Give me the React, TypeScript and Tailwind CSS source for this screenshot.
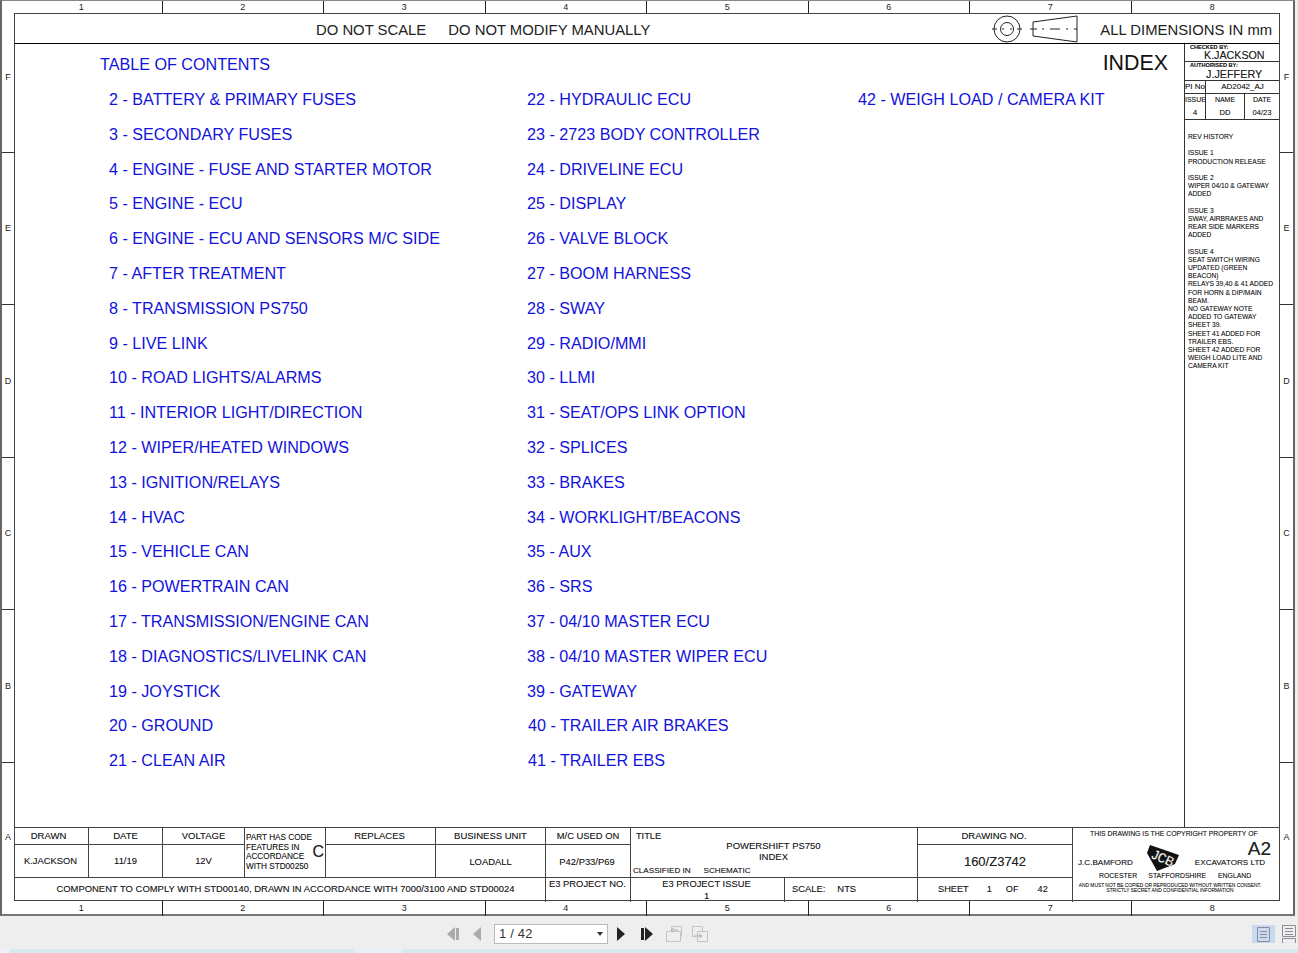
const leftCol = [
  "2 - BATTERY & PRIMARY FUSES",
  "3 - SECONDARY FUSES",
  "4 - ENGINE - FUSE AND STARTER MOTOR",
  "5 - ENGINE - ECU",
  "6 - ENGINE - ECU AND SENSORS M/C SIDE",
  "7 - AFTER TREATMENT",
  "8 - TRANSMISSION PS750",
  "9 - LIVE LINK",
  "10 - ROAD LIGHTS/ALARMS",
  "11 - INTERIOR LIGHT/DIRECTION",
  "12 - WIPER/HEATED WINDOWS",
  "13 - IGNITION/RELAYS",
  "14 - HVAC",
  "15 - VEHICLE CAN",
  "16 - POWERTRAIN CAN",
  "17 - TRANSMISSION/ENGINE CAN",
  "18 - DIAGNOSTICS/LIVELINK CAN",
  "19 - JOYSTICK",
  "20 - GROUND",
  "21 - CLEAN AIR",
];

const midCol = [
  "22 - HYDRAULIC ECU",
  "23 - 2723 BODY CONTROLLER",
  "24 - DRIVELINE ECU",
  "25 - DISPLAY",
  "26 - VALVE BLOCK",
  "27 - BOOM HARNESS",
  "28 - SWAY",
  "29 - RADIO/MMI",
  "30 - LLMI",
  "31 - SEAT/OPS LINK OPTION",
  "32 - SPLICES",
  "33 - BRAKES",
  "34 - WORKLIGHT/BEACONS",
  "35 - AUX",
  "36 - SRS",
  "37 - 04/10 MASTER ECU",
  "38 - 04/10 MASTER WIPER ECU",
  "39 - GATEWAY",
  "40 - TRAILER AIR BRAKES",
  "41 - TRAILER EBS",
];

const revHistory = [
  "REV HISTORY",
  "",
  "ISSUE 1",
  "PRODUCTION RELEASE",
  "",
  "ISSUE 2",
  "WIPER 04/10 & GATEWAY",
  "ADDED",
  "",
  "ISSUE 3",
  "SWAY, AIRBRAKES AND",
  "REAR SIDE MARKERS",
  "ADDED",
  "",
  "ISSUE 4",
  "SEAT SWITCH WIRING",
  "UPDATED (GREEN",
  "BEACON)",
  "RELAYS 39,40 & 41 ADDED",
  "FOR HORN & DIP/MAIN",
  "BEAM.",
  "NO GATEWAY NOTE",
  "ADDED TO GATEWAY",
  "SHEET 39.",
  "SHEET 41 ADDED FOR",
  "TRAILER EBS.",
  "SHEET 42 ADDED FOR",
  "WEIGH LOAD LITE AND",
  "CAMERA KIT",
];

const Ruler = ({ height }: { height: string }) => (
  <div className={`-ml-px grid w-[1292px] grid-cols-8 text-[9px] text-[#222] ${height}`}>
    {[1, 2, 3, 4, 5, 6, 7, 8].map((n) => (
      <div key={n} className="border-r border-[#222] text-center last:border-r-0">
        {n}
      </div>
    ))}
  </div>
);

const SideRuler = ({ width }: { width: string }) => (
  <div className={`flex flex-col text-[9px] text-[#222] ${width}`}>
    <div className="flex h-[140px] items-center justify-center border-b border-[#333] pb-[9px]">F</div>
    <div className="flex h-[152.4px] items-center justify-center border-b border-[#333]">E</div>
    <div className="flex h-[152.4px] items-center justify-center border-b border-[#333] pt-[1px]">D</div>
    <div className="flex h-[152.4px] items-center justify-center border-b border-[#333] pt-[1px]">C</div>
    <div className="flex h-[152.4px] items-center justify-center border-b border-[#333] pt-[1px]">B</div>
    <div className="flex flex-1 items-center justify-center pt-[12px]">A</div>
  </div>
);

const ProjectionIcon = () => (
  <svg width="90" height="30" viewBox="0 0 90 30" className="shrink-0" fill="none" stroke="#222" strokeWidth="1">
    <circle cx="17" cy="15" r="13" />
    <circle cx="17" cy="15" r="6.5" />
    <path d="M2 15h5M12 15h2M20 15h2M27 15h5" />
    <path d="M43 8 87 2v26L43 22Z" />
    <path d="M40 15h7M52 15h2M60 15h10M76 15h2M84 15h3" />
  </svg>
);

const JcbLogo = () => (
  <svg width="34" height="28" viewBox="0 0 34 28" className="shrink-0 overflow-visible">
    <path d="M4 1 33 11 29 20 11 27 1 9Z" fill="#111" />
    <g transform="rotate(24 17 14)">
      <text
        x="17"
        y="19"
        textAnchor="middle"
        fontFamily="Liberation Sans, sans-serif"
        fontWeight="700"
        fontSize="14"
        textLength="23"
        lengthAdjust="spacingAndGlyphs"
        fill="#fff"
        stroke="#111"
        strokeWidth="0.3"
      >
        JCB
      </text>
    </g>
  </svg>
);

const Cell = ({ className = "", children }: { className?: string; children?: React.ReactNode }) => (
  <div className={`flex items-center justify-center border-r border-b border-[#444] text-center ${className}`}>
    {children}
  </div>
);

const TitleBlock = () => (
  <div className="grid h-[73px] grid-cols-[74px_74px_82px_81px_110px_110px_85px_154px_133px_155px_1fr] grid-rows-[17px_33px_1fr] border-t border-[#444] text-[9.4px] text-[#222] [text-shadow:0_0_0.4px_#0006]">
    <Cell className="col-start-1 row-start-1 pr-[6px] text-[9.5px]">DRAWN</Cell>
    <Cell className="col-start-1 row-start-2 pr-[2px]">K.JACKSON</Cell>
    <Cell className="col-start-2 row-start-1 text-[9.5px]">DATE</Cell>
    <Cell className="col-start-2 row-start-2">11/19</Cell>
    <Cell className="col-start-3 row-start-1 text-[9.5px]">VOLTAGE</Cell>
    <Cell className="col-start-3 row-start-2">12V</Cell>
    <div className="relative col-start-4 row-span-2 row-start-1 border-r border-b border-[#444] pt-[5px] pl-[1px] text-[8.2px] leading-[9.5px]">
      PART HAS CODE
      <br />
      FEATURES IN
      <br />
      ACCORDANCE
      <br />
      WITH STD00250
      <span className="absolute top-[15px] right-[1px] text-[16px] leading-[18px]">C</span>
    </div>
    <Cell className="col-start-5 row-start-1 pr-[2px] text-[9.5px]">REPLACES</Cell>
    <Cell className="col-start-5 row-start-2" />
    <Cell className="col-start-6 row-start-1 text-[9.5px]">BUSINESS UNIT</Cell>
    <Cell className="col-start-6 row-start-2 pt-[3px]">LOADALL</Cell>
    <Cell className="col-start-7 row-start-1">M/C USED ON</Cell>
    <Cell className="col-start-7 row-start-2 pt-[3px] pr-[2px]">P42/P33/P69</Cell>
    <div className="col-span-2 col-start-8 row-span-2 row-start-1 flex flex-col border-r border-b border-[#444]">
      <div className="h-[12px] pl-[5px] text-[9.2px] leading-[17px]">TITLE</div>
      <div className="pr-[1px] text-center text-[9.5px] leading-[11px]">
        POWERSHIFT PS750
        <br />
        INDEX
      </div>
      <div className="mt-auto flex gap-[13px] pb-[1px] pl-[2px] text-[8.1px] leading-[10px]">
        <span>CLASSIFIED IN</span>
        <span>SCHEMATIC</span>
      </div>
    </div>
    <Cell className="col-start-10 row-start-1 pr-[2px] text-[9.5px]">DRAWING NO.</Cell>
    <Cell className="col-start-10 row-start-2 pt-[1px] text-[13px]">160/Z3742</Cell>
    <div className="relative col-start-11 row-span-3 row-start-1 flex flex-col">
      <div className="pt-px pl-[17px] text-[6.87px] leading-[10px]">THIS DRAWING IS THE COPYRIGHT PROPERTY OF</div>
      <span className="absolute top-[11px] right-[8px] text-[19px] leading-[20px]">A2</span>
      <div className="mt-[5px] flex h-[28px] items-end text-[8.1px] leading-[10px]">
        <span className="pb-[4px] pl-[5px]">J.C.BAMFORD</span>
        <span className="ml-[13px]">
          <JcbLogo />
        </span>
        <span className="ml-[15px] pb-[4px]">EXCAVATORS LTD</span>
      </div>
      <div className="-mt-px flex text-[6.9px] leading-[10px]">
        <span className="ml-[26px]">ROCESTER</span>
        <span className="ml-[11px]">STAFFORDSHIRE</span>
        <span className="ml-[12px]">ENGLAND</span>
      </div>
      <div className="mt-[2px] pr-[12px] text-center text-[4.87px] leading-[5px]">
        AND MUST NOT BE COPIED OR REPRODUCED WITHOUT WRITTEN CONSENT.
        <br />
        STRICTLY SECRET AND CONFIDENTIAL INFORMATION
      </div>
    </div>
    <div className="col-span-6 col-start-1 row-start-3 flex items-center justify-center border-r border-[#444] pb-[1px] pl-[11px] text-[9.45px]">
      COMPONENT TO COMPLY WITH STD00140, DRAWN IN ACCORDANCE WITH 7000/3100 AND STD00024
    </div>
    <div className="col-start-7 row-start-3 border-r border-[#444] pl-[3px] leading-[12px]">E3 PROJECT NO.</div>
    <div className="col-start-8 row-start-3 border-r border-[#444] pr-[2px] text-center leading-[12px]">
      E3 PROJECT ISSUE
      <br />1
    </div>
    <div className="col-start-9 row-start-3 flex items-center border-r border-[#444] pb-[1px] pl-[7px]">
      <span>SCALE:</span>
      <span className="ml-[12px]">NTS</span>
    </div>
    <div className="col-start-10 row-start-3 flex items-center border-r border-[#444] pb-[1px] pl-[20px] text-[9.2px]">
      <span>SHEET</span>
      <span className="ml-[18px]">1</span>
      <span className="ml-[14px]">OF</span>
      <span className="ml-[19px]">42</span>
    </div>
  </div>
);

const RevisionPanel = () => (
  <div className="w-[95px] shrink-0 border-l border-[#333] text-[#222] [text-shadow:0_0_0.4px_#0006]">
    <div className="h-[18px] border-b border-[#333] text-[10.7px] leading-[10px]">
      <div className="pt-[1px] pl-[5px] text-[5.6px] leading-[4px] font-bold">CHECKED BY:</div>
      <div className="pt-[1px] pl-[19px]">K.JACKSON</div>
    </div>
    <div className="h-[19px] border-b border-[#333] text-[10.8px] leading-[10px]">
      <div className="pt-[1px] pl-[5px] text-[5.6px] leading-[4px] font-bold">AUTHORISED BY:</div>
      <div className="pt-[2px] pl-[21px]">J.JEFFERY</div>
    </div>
    <div className="flex h-[13px] border-b border-[#333] text-[8px] leading-[12px]">
      <div className="w-[21px] border-r border-[#333] text-center">PI No</div>
      <div className="flex-1 text-center">AD2042_AJ</div>
    </div>
    <div className="flex h-[26px] border-b border-[#333] text-center text-[7px] leading-[12px]">
      <div className="w-[21px] border-r border-[#333]">
        ISSUE
        <div className="text-[7.6px] leading-[13px]">4</div>
      </div>
      <div className="w-[39px] border-r border-[#333]">
        NAME
        <div className="text-[7.6px] leading-[13px]">DD</div>
      </div>
      <div className="flex-1">
        DATE
        <div className="text-[7.6px] leading-[13px]">04/23</div>
      </div>
    </div>
    <div className="pt-[13px] pl-[3px] text-[6.7px] leading-[8.2px]">
      {revHistory.map((line, i) => (
        <div key={i} className="h-[8.2px] whitespace-nowrap">
          {line}
        </div>
      ))}
    </div>
  </div>
);

const ContentsColumn = ({ items, className }: { items: string[]; className: string }) => (
  <div className={`flex flex-col ${className}`}>
    {items.map((item) => (
      <div
        key={item}
        className={`h-[34.8px] whitespace-nowrap leading-[34.8px] ${item.startsWith("40") || item.startsWith("41") ? "pl-px" : ""}`}
      >
        {item}
      </div>
    ))}
  </div>
);

const Frame = () => (
  <div className="flex w-[1266px] shrink-0 flex-col border border-[#444] bg-white">
    <div className="flex h-[30px] items-center border-b border-black text-[14.85px] text-[#222]">
      <span className="ml-[301px] pt-[3px]">DO NOT SCALE</span>
      <span className="ml-[22px] pt-[3px]">DO NOT MODIFY MANUALLY</span>
      <span className="ml-[340px]">
        <ProjectionIcon />
      </span>
      <span className="ml-[20px] pt-[3px]">ALL DIMENSIONS IN mm</span>
    </div>
    <div className="flex min-h-0 flex-1">
      <div className="flex-1 text-[16.15px] text-[#1212dc]">
        <div className="flex h-[38.1px] items-center justify-between pt-[3px] pr-[16px] pl-[85px]">
          <span>TABLE OF CONTENTS</span>
          <span className="-mt-[3px] text-[21.4px] text-[#111]">INDEX</span>
        </div>
        <div className="flex">
          <ContentsColumn items={leftCol} className="ml-[94px] w-[418px]" />
          <ContentsColumn items={midCol} className="w-[331px]" />
          <ContentsColumn items={["42 - WEIGH LOAD / CAMERA KIT"]} className="" />
        </div>
      </div>
      <RevisionPanel />
    </div>
    <TitleBlock />
  </div>
);

const Triangle = ({ dir, color, bar }: { dir: "left" | "right"; color: string; bar?: boolean }) => (
  <svg width="15" height="16" viewBox="0 0 15 16" fill={color}>
    {dir === "left" ? <path d="M10 1v14L2 8Z" /> : <path d="M4 1v14l8-7Z" />}
    {bar && (dir === "left" ? <path d="M11 2h3v12h-3Z" /> : <path d="M0 2h3v12H0Z" />)}
  </svg>
);

const MoveIcon = ({ flip }: { flip?: boolean }) => (
  <svg width="18" height="18" viewBox="0 0 18 18" fill="none" stroke="#c4c4c4">
    {flip ? (
      <>
        <path d="M1.5 1.5h10v5M1.5 1.5v10h3" />
        <path d="M6.5 6.5h10v10h-10Z" />
        <path d="M3 11h8M8 9l3 2-3 2" stroke="#a8b4bc" />
      </>
    ) : (
      <>
        <path d="M6.5 1.5h10v10M6.5 1.5v3" />
        <path d="M1.5 6.5h14v10h-14Z" />
        <path d="M13 5H6M9 3 6 5l3 2" stroke="#a8b4bc" />
      </>
    )}
  </svg>
);

const Toolbar = () => (
  <div className="flex h-[33px] items-center pt-[3px] text-[13px] text-[#333]">
    <div className="ml-[445px]">
      <Triangle dir="left" color="#aaa" bar />
    </div>
    <div className="ml-[11px]">
      <Triangle dir="left" color="#aaa" />
    </div>
    <div className="ml-[8px] flex h-[20px] w-[114px] items-center justify-between border border-[#bbb] bg-white pr-[4px] pl-[4px] tracking-[0.2px]">
      <span>1 / 42</span>
      <svg width="6" height="4" viewBox="0 0 6 4" fill="#333">
        <path d="M0 0h6L3 4Z" />
      </svg>
    </div>
    <div className="ml-[5px]">
      <Triangle dir="right" color="#222" />
    </div>
    <div className="ml-[13px]">
      <Triangle dir="right" color="#222" bar />
    </div>
    <div className="ml-[9px]">
      <MoveIcon />
    </div>
    <div className="ml-[8px]">
      <MoveIcon flip />
    </div>
    <div className="ml-auto flex h-[18px] w-[23px] items-center justify-center bg-[#c9d9f0]">
      <svg width="13" height="15" viewBox="0 0 13 15" fill="none" stroke="#8a8f96">
        <path d="M.5.5h12v14H.5ZM3 4.5h7M3 7.5h7M3 10.5h7" />
      </svg>
    </div>
    <div className="mr-[2px] ml-[7px] h-[18px]">
      <svg width="14" height="18" viewBox="0 0 14 18" fill="none" stroke="#8a8f96">
        <path d="M.5.5h13v11H.5ZM3 3.5h8M3 6.5h8M3 9.5h8M.5 18v-4.5h13V18" />
      </svg>
    </div>
  </div>
);

export default function App() {
  return (
    <div className="flex h-[953px] w-[1298px] flex-col overflow-hidden bg-[#eeeeee] font-['Liberation_Sans',Arial,sans-serif]">
      <div className="h-[916px] w-[1295px] shrink-0 border-x-2 border-t border-b-2 border-x-[#666] border-t-[#888] border-b-[#777] bg-white">
        <Ruler height="h-[12px] leading-[13px]" />
        <div className="flex h-[888px]">
          <SideRuler width="w-[12px]" />
          <Frame />
          <SideRuler width="w-[13px]" />
        </div>
        <Ruler height="h-[13px] leading-[15px]" />
      </div>
      <Toolbar />
      <div className="flex h-[4px] flex-1 bg-[#d6e8f0]">
        <div className="w-[10px] bg-[#eef2f2]" />
        <div className="ml-[345px] w-[48px] bg-[#e6f1f5]" />
      </div>
    </div>
  );
}
